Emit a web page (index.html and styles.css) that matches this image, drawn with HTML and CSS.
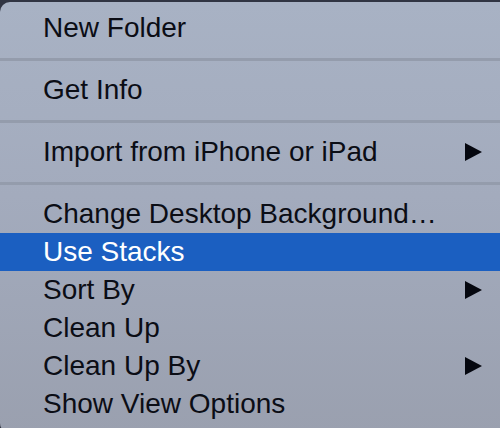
FILE: index.html
```html
<!DOCTYPE html>
<html lang="en">
<head>
<meta charset="utf-8">
<title>Desktop context menu</title>
<link rel="stylesheet" href="styles.css">
</head>
<body>
<div class="menu">
  <div class="item"><span class="label">New Folder</span></div>
  <div class="sep"></div>
  <div class="item"><span class="label">Get Info</span></div>
  <div class="sep"></div>
  <div class="item"><span class="label">Import from iPhone or iPad</span>
    <svg class="arrow" viewBox="0 0 18 18"><path d="M1 0 L18 9 L1 18 Z"/></svg></div>
  <div class="sep"></div>
  <div class="item"><span class="label">Change Desktop Background…</span></div>
  <div class="item active"><span class="label">Use Stacks</span></div>
  <div class="item"><span class="label">Sort By</span>
    <svg class="arrow" viewBox="0 0 18 18"><path d="M1 0 L18 9 L1 18 Z"/></svg></div>
  <div class="item"><span class="label">Clean Up</span></div>
  <div class="item"><span class="label">Clean Up By</span>
    <svg class="arrow" viewBox="0 0 18 18"><path d="M1 0 L18 9 L1 18 Z"/></svg></div>
  <div class="item"><span class="label">Show View Options</span></div>
</div>
</body>
</html>
```
FILE: styles.css
```css
html, body {
  margin: 0;
  padding: 0;
}
body {
  width: 500px;
  height: 428px;
  overflow: hidden;
  background: #313543;
  font-family: "Liberation Sans", Arial, sans-serif;
}
.menu {
  margin-top: 2px;
  border-radius: 10px 0 0 10px;
  padding: 7px 0 10px;
  background: linear-gradient(180deg, #a8b2c4 0%, #a3abbd 45%, #9aa0af 100%);
}
.item {
  height: 38px;
  line-height: 38px;
  padding: 0 18px 0 43px;
  display: flex;
  justify-content: space-between;
  align-items: center;
  font-size: 28px;
  color: #0b0d15;
  white-space: nowrap;
}
.item.active {
  background: #1b5fc1;
  color: #ffffff;
}
.label {
  display: block;
}
.arrow {
  width: 18px;
  height: 18px;
  fill: #05070f;
}
.sep {
  height: 3px;
  margin: 11px 0 10px;
  background: #949cac;
}
```
